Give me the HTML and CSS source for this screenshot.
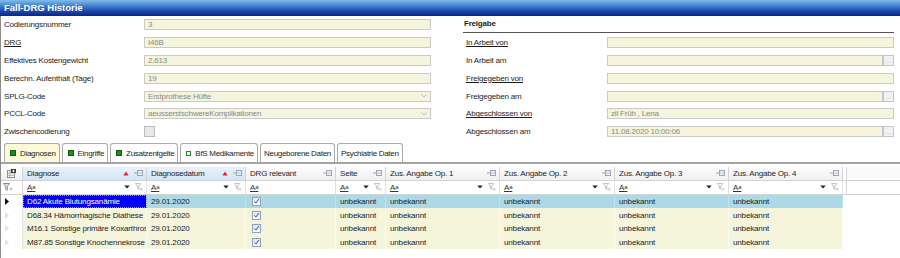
FILE: index.html
```html
<!DOCTYPE html>
<html lang="de">
  <head>
    <meta charset="UTF-8" />
    <title>Fall-DRG Historie</title>
    <link rel="stylesheet" href="styles.css">
  </head>
  <body>
    <svg class="defs" width="0" height="0">
      <defs>
        <symbol id="pin" viewBox="0 0 9 6">
          <path d="M0 3h3.5" stroke="#9aa6b6" fill="none"/>
          <rect x="3.5" y="0.5" width="5" height="5" fill="#eef1f5" stroke="#9aa6b6"/>
          <path d="M3.5 3h5" stroke="#b8c2ce" fill="none"/>
        </symbol>
        <symbol id="sort-up" viewBox="0 0 6 5">
          <path d="M3 0.5L5.6 4.5H0.4z" fill="#e0262a"/>
        </symbol>
        <symbol id="drop" viewBox="0 0 6 4">
          <path d="M0.3 0.5h5.4L3 3.6z" fill="#222"/>
        </symbol>
        <symbol id="funnel-x" viewBox="0 0 9 9">
          <path d="M0.5 0.5h6L4.3 3.3v3.9L2.7 6.1V3.3z" fill="none" stroke="#b9b9b9"/>
          <path d="M5.6 5.8l2.6 2.6M8.2 5.8l-2.6 2.6" stroke="#b9b9b9" fill="none"/>
        </symbol>
        <symbol id="row-mark" viewBox="0 0 4 7">
          <path d="M0 0L4 3.5L0 7z"/>
        </symbol>
        <symbol id="tick" viewBox="0 0 8 8">
          <path d="M1.4 3.8l1.9 2 3.3-4.6" stroke="#2b46c6" stroke-width="1.1" fill="none"/>
        </symbol>
        <symbol id="chev" viewBox="0 0 6 4">
          <path d="M0.5 0.5L3 3L5.5 0.5" stroke="#bdbdbd" fill="none"/>
        </symbol>
      </defs>
    </svg>

    <div class="title-bar">Fall-DRG Historie</div>

    <div class="main">
      <div class="form">
        <div class="form-col left">
          <div class="form-row"><span class="lbl">Codierungsnummer</span><div class="field">3</div></div>
          <div class="form-row"><span class="lbl link">DRG</span><div class="field">I46B</div></div>
          <div class="form-row"><span class="lbl">Effektives Kostengewicht</span><div class="field">2.613</div></div>
          <div class="form-row"><span class="lbl">Berechn. Aufenthalt (Tage)</span><div class="field">19</div></div>
          <div class="form-row">
            <span class="lbl">SPLG-Code</span>
            <div class="field select">Erstprothese Hüfte<svg class="chev"><use href="#chev"/></svg></div>
          </div>
          <div class="form-row">
            <span class="lbl">PCCL-Code</span>
            <div class="field select">aeusserstschwereKomplikationen<svg class="chev"><use href="#chev"/></svg></div>
          </div>
          <div class="form-row"><span class="lbl">Zwischencodierung</span><span class="check-box"></span></div>
        </div>

        <div class="form-col right">
          <div class="group-title">Freigabe</div>
          <div class="form-row"><span class="lbl link">In Arbeit von</span><div class="field"></div></div>
          <div class="form-row">
            <span class="lbl">In Arbeit am</span>
            <div class="field"></div><span class="dots">...</span>
          </div>
          <div class="form-row"><span class="lbl link">Freigegeben von</span><div class="field"></div></div>
          <div class="form-row">
            <span class="lbl">Freigegeben am</span>
            <div class="field"></div><span class="dots">...</span>
          </div>
          <div class="form-row"><span class="lbl link">Abgeschlossen von</span><div class="field">zil Früh , Lena</div></div>
          <div class="form-row">
            <span class="lbl">Abgeschlossen am</span>
            <div class="field">11.08.2020 10:00:06</div><span class="dots">...</span>
          </div>
        </div>
      </div>

      <div class="tabs">
        <div class="tab active"><span class="sq"></span>Diagnosen</div>
        <div class="tab"><span class="sq"></span>Eingriffe</div>
        <div class="tab"><span class="sq"></span>Zusatzentgelte</div>
        <div class="tab"><span class="sq empty"></span>BfS Medikamente</div>
        <div class="tab plain">Neugeborene Daten</div>
        <div class="tab plain">Psychiatrie Daten</div>
      </div>

      <div class="grid">
        <div class="g-row g-head">
          <div class="cell sel">
            <svg class="chooser" viewBox="0 0 9 9">
              <rect x="0.5" y="1.5" width="7" height="7" fill="#fff" stroke="#8a8a8a"/>
              <path d="M0.5 4h7M0.5 6.3h7M3 1.5v7" stroke="#b0b0b0"/>
              <rect x="4" y="0" width="5" height="4" fill="#333"/>
              <path d="M6.5 0.8v2.4M5.3 2h2.4" stroke="#fff"/>
            </svg>
          </div>
          <div class="cell sorted">Diagnose<svg class="sort"><use href="#sort-up"/></svg><svg class="pin"><use href="#pin"/></svg></div>
          <div class="cell sorted">Diagnosedatum<svg class="sort"><use href="#sort-up"/></svg><svg class="pin"><use href="#pin"/></svg></div>
          <div class="cell">DRG relevant<svg class="pin"><use href="#pin"/></svg></div>
          <div class="cell">Seite<svg class="pin"><use href="#pin"/></svg></div>
          <div class="cell">Zus. Angabe Op. 1<svg class="pin"><use href="#pin"/></svg></div>
          <div class="cell">Zus. Angabe Op. 2<svg class="pin"><use href="#pin"/></svg></div>
          <div class="cell">Zus. Angabe Op. 3<svg class="pin"><use href="#pin"/></svg></div>
          <div class="cell">Zus. Angabe Op. 4<svg class="pin"><use href="#pin"/></svg></div>
          <div class="cell filler"></div>
        </div>

        <div class="g-row g-filter">
          <div class="cell sel">
            <svg class="filter-sel" viewBox="0 0 10 8">
              <path d="M0.5 0.5h6L4.3 3.4v3.8L2.7 6.2V3.4z" fill="#e4e4e4" stroke="#8c8c8c"/>
              <path d="M7.5 4.5l2 1.5-2 1.5z" fill="#8c8c8c"/>
            </svg>
          </div>
          <div class="cell"><span class="op">A<small>a</small></span><svg class="drop"><use href="#drop"/></svg><svg class="fx"><use href="#funnel-x"/></svg></div>
          <div class="cell"><span class="op">A<small>a</small></span><svg class="drop"><use href="#drop"/></svg><svg class="fx"><use href="#funnel-x"/></svg></div>
          <div class="cell"><span class="op">A<small>a</small></span></div>
          <div class="cell"><span class="op">A<small>a</small></span><svg class="drop"><use href="#drop"/></svg><svg class="fx"><use href="#funnel-x"/></svg></div>
          <div class="cell"><span class="op">A<small>a</small></span><svg class="drop"><use href="#drop"/></svg><svg class="fx"><use href="#funnel-x"/></svg></div>
          <div class="cell"><span class="op">A<small>a</small></span><svg class="drop"><use href="#drop"/></svg><svg class="fx"><use href="#funnel-x"/></svg></div>
          <div class="cell"><span class="op">A<small>a</small></span><svg class="drop"><use href="#drop"/></svg><svg class="fx"><use href="#funnel-x"/></svg></div>
          <div class="cell"><span class="op">A<small>a</small></span><svg class="drop"><use href="#drop"/></svg><svg class="fx"><use href="#funnel-x"/></svg></div>
          <div class="cell filler"></div>
        </div>

        <div class="g-row g-data current">
          <div class="cell sel"><svg class="mark"><use href="#row-mark"/></svg></div>
          <div class="cell focus">D62 Akute Blutungsanämie</div>
          <div class="cell">29.01.2020</div>
          <div class="cell"><span class="cb"><svg><use href="#tick"/></svg></span></div>
          <div class="cell">unbekannt</div>
          <div class="cell">unbekannt</div>
          <div class="cell">unbekannt</div>
          <div class="cell">unbekannt</div>
          <div class="cell">unbekannt</div>
          <div class="cell filler"></div>
        </div>

        <div class="g-row g-data">
          <div class="cell sel"><svg class="mark"><use href="#row-mark"/></svg></div>
          <div class="cell">D68.34 Hämorrhagische Diathese</div>
          <div class="cell">29.01.2020</div>
          <div class="cell"><span class="cb"><svg><use href="#tick"/></svg></span></div>
          <div class="cell">unbekannt</div>
          <div class="cell">unbekannt</div>
          <div class="cell">unbekannt</div>
          <div class="cell">unbekannt</div>
          <div class="cell">unbekannt</div>
          <div class="cell filler"></div>
        </div>

        <div class="g-row g-data">
          <div class="cell sel"><svg class="mark"><use href="#row-mark"/></svg></div>
          <div class="cell">M16.1 Sonstige primäre Koxarthrose</div>
          <div class="cell">29.01.2020</div>
          <div class="cell"><span class="cb"><svg><use href="#tick"/></svg></span></div>
          <div class="cell">unbekannt</div>
          <div class="cell">unbekannt</div>
          <div class="cell">unbekannt</div>
          <div class="cell">unbekannt</div>
          <div class="cell">unbekannt</div>
          <div class="cell filler"></div>
        </div>

        <div class="g-row g-data">
          <div class="cell sel"><svg class="mark"><use href="#row-mark"/></svg></div>
          <div class="cell">M87.85 Sonstige Knochennekrose</div>
          <div class="cell">29.01.2020</div>
          <div class="cell"><span class="cb"><svg><use href="#tick"/></svg></span></div>
          <div class="cell">unbekannt</div>
          <div class="cell">unbekannt</div>
          <div class="cell">unbekannt</div>
          <div class="cell">unbekannt</div>
          <div class="cell">unbekannt</div>
          <div class="cell filler"></div>
        </div>
      </div>
    </div>
  </body>
</html>
```

FILE: styles.css
```css
body {
  margin: 0;
  width: 900px;
  height: 258px;
  overflow: hidden;
  background-color: #fff;
  color: #1c1c1c;
  font-family: "Liberation Sans", Arial, sans-serif;
  font-size: 8px;
  letter-spacing: -0.2px;
}

.defs {
  position: absolute;
}

.title-bar {
  height: 16px;
  line-height: 16px;
  padding-left: 4px;
  color: #fff;
  font-size: 9.5px;
  font-weight: bold;
  letter-spacing: 0;
  background: linear-gradient(#80bce8, #4384d2 35%, #1f4fb2 65%, #0a2286);
}

.main {
  border-left: 1px solid #8c8c8c;
  height: 242px;
}

/* form */

.form {
  display: flex;
  gap: 32px;
  padding: 0 6px 0 3px;
}

.form-col {
  display: flex;
  flex-direction: column;
}

.form-col.left {
  width: 427px;
}

.form-col.right {
  flex: 1;
}

.form-row {
  display: flex;
  align-items: center;
  height: 17.8px;
}

.lbl {
  width: 140px;
  flex-shrink: 0;
  white-space: nowrap;
}

.right .lbl {
  width: 141px;
  padding-left: 3px;
}

.lbl.link {
  text-decoration: underline;
}

.group-title {
  height: 16px;
  line-height: 16px;
  padding-left: 1px;
  font-weight: bold;
  border-bottom: 1px solid #555;
  margin-bottom: 0.8px;
}

.field {
  flex: 1;
  height: 11px;
  box-sizing: border-box;
  border: 1px solid #cacaca;
  background-color: #f5f4dc;
  color: #8a8a8a;
  padding-left: 3px;
  display: flex;
  align-items: center;
  white-space: nowrap;
}

.field.select {
  justify-content: space-between;
  padding-right: 3px;
}

.chev {
  width: 6px;
  height: 4px;
}

.dots {
  width: 11px;
  height: 11px;
  box-sizing: border-box;
  border: 1px solid #c4c4c4;
  background-color: #f2f2f2;
  color: #9a9a9a;
  font-size: 6px;
  line-height: 11px;
  text-align: center;
  letter-spacing: 0;
}

.check-box {
  width: 9px;
  height: 9px;
  border: 1px solid #bdbdbd;
  background-color: #e9e9e9;
}

/* tabs */

.tabs {
  display: flex;
  gap: 2px;
  padding-left: 3px;
  margin-top: 2.4px;
  height: 19px;
}

.tab {
  display: flex;
  align-items: center;
  gap: 4px;
  height: 19px;
  box-sizing: border-box;
  padding: 1px 3px 0 5px;
  border: 1px solid #aaa;
  border-bottom: none;
  border-radius: 3px 3px 0 0;
  background-color: #fff;
  white-space: nowrap;
  letter-spacing: -0.3px;
}

.tab.plain {
  padding: 1px 3px 0 3px;
}

.tab.active {
  background-color: #fdfbd7;
}

.sq {
  width: 4px;
  height: 4px;
  background-color: #1c8e1c;
  border: 1px solid #0f5f0f;
}

.sq.empty {
  background-color: #fff;
  border-color: #1c8e1c;
  width: 3px;
  height: 3px;
  border-width: 1.5px;
}

/* grid */

.grid {
  border-top: 2px solid #a4a4a4;
  padding-top: 3px;
}

.g-row {
  display: grid;
  grid-template-columns: 22px 124px 99px 90px 50px 114px 115px 114px 114px 1fr;
}

.cell {
  display: flex;
  align-items: center;
  box-sizing: border-box;
  padding-left: 4px;
  white-space: nowrap;
  overflow: hidden;
}

.g-head {
  height: 14px;
}

.g-head .cell {
  border-right: 1px solid #d3d3d3;
  border-bottom: 1px solid #d3d3d3;
  background: linear-gradient(#fdfdfd, #f0f0f0);
  padding-right: 3px;
}

.g-head .cell.sorted {
  background: linear-gradient(#e8f2fb, #d2e5f6);
}

.g-head .cell.filler {
  background: #fafafa;
  border-right: none;
  box-shadow: inset 3px 0 0 #fff, inset 4px 0 0 #d3d3d3;
}

.g-head .cell.sel {
  padding-left: 6px;
}

.chooser {
  width: 9px;
  height: 9px;
}

.sort {
  width: 6px;
  height: 5px;
  margin-left: auto;
  margin-right: 5px;
}

.pin {
  width: 9px;
  height: 6px;
  margin-left: auto;
}

.sort + .pin {
  margin-left: 0;
}

.g-filter {
  height: 14px;
}

.g-filter .cell {
  border-right: 1px solid #e2e2e2;
  border-bottom: 1px solid #d3d3d3;
  padding-right: 3px;
}

.g-filter .cell.filler {
  border-right: none;
  box-shadow: inset 3px 0 0 #fff, inset 4px 0 0 #d3d3d3;
}

.g-filter .cell.sel {
  padding-left: 2px;
  border-right-color: #d3d3d3;
}

.filter-sel {
  width: 10px;
  height: 8px;
}

.op {
  color: #333;
  font-size: 8px;
  text-decoration: underline;
}

.op small {
  font-size: 6px;
  vertical-align: 1px;
}

.drop {
  width: 6px;
  height: 4px;
  margin-left: auto;
  margin-right: 5px;
}

.fx {
  width: 8px;
  height: 8px;
}

.g-data {
  height: 13.5px;
}

.g-data .cell {
  background-color: #f5f5dc;
  border-right: 1px solid #fbfbee;
  letter-spacing: -0.15px;
}

.g-data.current .cell {
  background-color: #add8e6;
  border-right-color: #c4e3ee;
}

.g-data .cell.sel,
.g-data .cell.filler {
  background-color: #fff;
  border-right: 1px solid #e4e4e4;
}

.g-data .cell.filler {
  border-right: none;
}

.g-data.current .cell.focus {
  background-color: #0000f6;
  color: #fff;
  outline: 1px dotted #8c8cff;
  outline-offset: -1px;
}

.mark {
  width: 4px;
  height: 7px;
  fill: #e2e2e2;
}

.current .mark {
  fill: #111;
}

.cb {
  width: 7px;
  height: 7px;
  margin-left: 2px;
  border: 1px solid #8fa3c0;
  background: linear-gradient(#e6e6e6, #fafafa);
  display: flex;
}

.cb svg {
  width: 7px;
  height: 7px;
}
```
